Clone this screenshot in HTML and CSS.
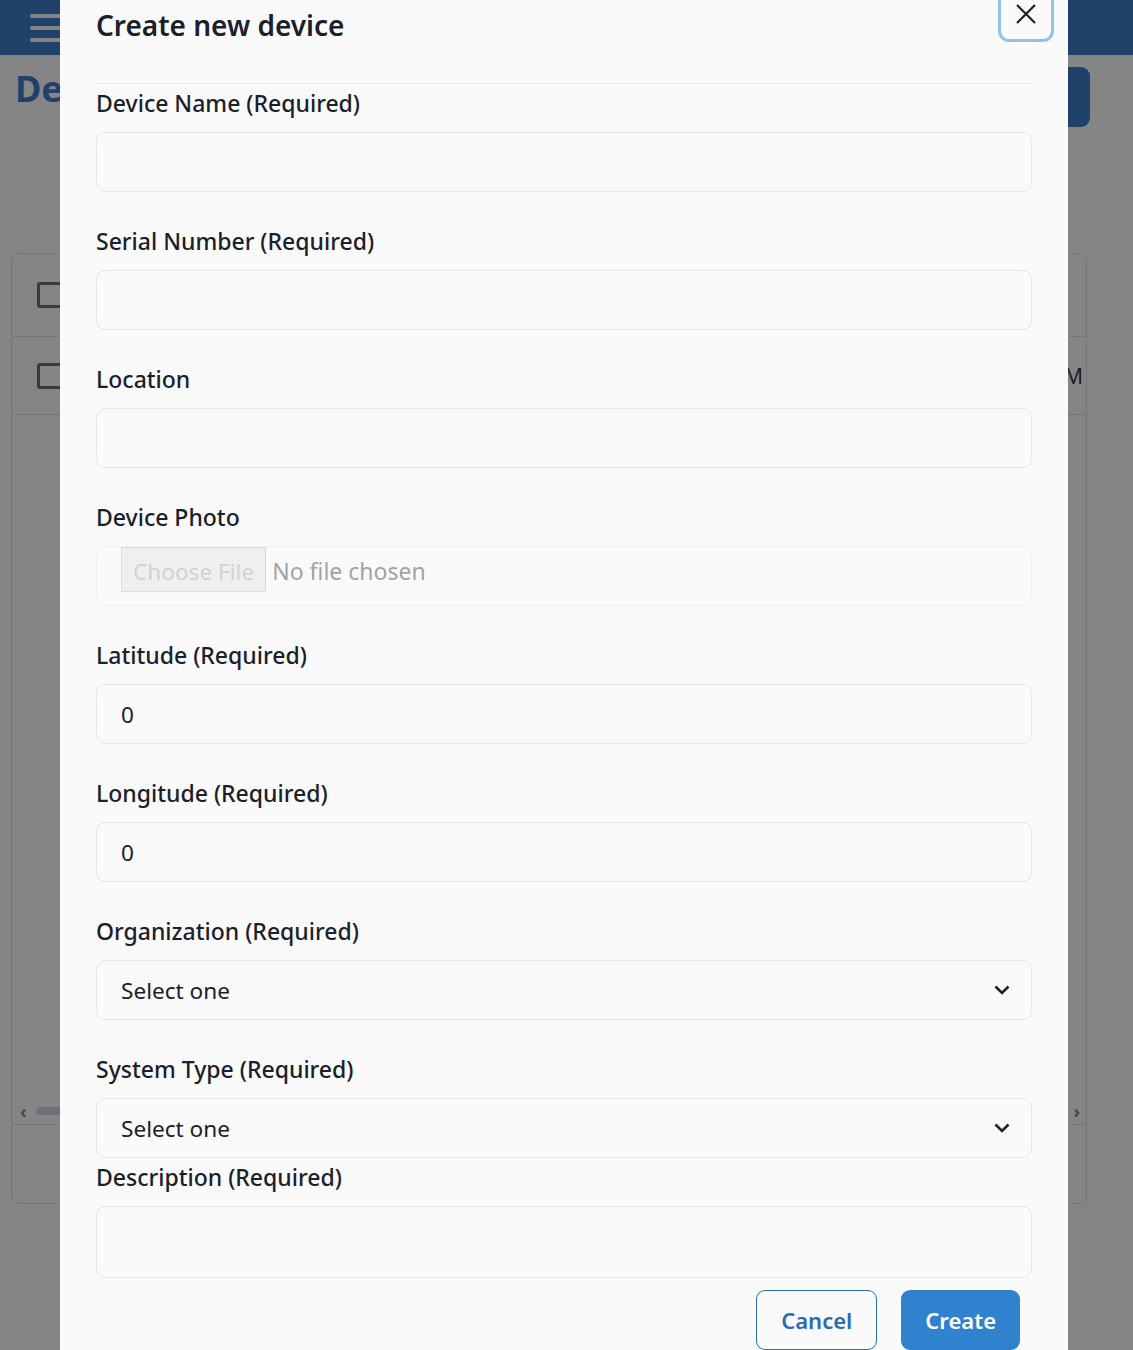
FILE: index.html
```html
<!DOCTYPE html>
<html lang="en">
<head>
  <meta charset="UTF-8">
  <title>Devices</title>
  <link rel="stylesheet" href="styles.css">
</head>
<body>

<!-- page behind the modal -->
<header class="navbar">
  <button class="menu-btn" type="button"><span></span><span></span><span></span></button>
</header>

<main class="page">
  <div class="page-head">
    <h1>Devices</h1>
    <button class="add-btn" type="button">Add device</button>
  </div>

  <div class="table-card">
    <div class="table-row head"><span class="check"></span></div>
    <div class="table-row"><span class="check"></span><span class="cell-end">10:00 AM</span></div>
    <div class="table-body"></div>
    <div class="table-scroll"><span class="arrow">&#8249;</span><div class="thumb"></div><span class="arrow">&#8250;</span></div>
    <div class="table-foot"></div>
  </div>
</main>

<div class="backdrop"></div>

<!-- CREATE DEVICE MODAL -->
<section class="modal">
  <div class="modal-head">
    <h2 class="modal-title">Create new device</h2>
    <button class="close-btn" type="button" aria-label="Close">
      <svg width="20" height="20" viewBox="0 0 20 20"><path d="M1 1 L19 19 M19 1 L1 19" stroke="#1a202c" stroke-width="2.2" fill="none"/></svg>
    </button>
  </div>

  <form class="modal-form">
    <div class="field">
      <label>Device Name (Required)</label>
      <input class="input" type="text">
    </div>
    <div class="field">
      <label>Serial Number (Required)</label>
      <input class="input" type="text">
    </div>
    <div class="field">
      <label>Location</label>
      <input class="input" type="text">
    </div>
    <div class="field">
      <label>Device Photo</label>
      <input class="input file-input" type="file" accept="image/*">
    </div>
    <div class="field">
      <label>Latitude (Required)</label>
      <input class="input" type="number" value="0">
    </div>
    <div class="field">
      <label>Longitude (Required)</label>
      <input class="input" type="number" value="0">
    </div>
    <div class="field">
      <label>Organization (Required)</label>
      <div class="select-wrap">
        <select class="input select"><option>Select one</option></select>
        <svg class="chevron" width="16" height="10" viewBox="0 0 16 10"><path d="M1.5 1.5 L8 8 L14.5 1.5" stroke="#1a202c" stroke-width="2.6" fill="none"/></svg>
      </div>
    </div>
    <div class="field tight">
      <label>System Type (Required)</label>
      <div class="select-wrap">
        <select class="input select"><option>Select one</option></select>
        <svg class="chevron" width="16" height="10" viewBox="0 0 16 10"><path d="M1.5 1.5 L8 8 L14.5 1.5" stroke="#1a202c" stroke-width="2.6" fill="none"/></svg>
      </div>
    </div>
    <div class="field last">
      <label>Description (Required)</label>
      <textarea class="input textarea"></textarea>
    </div>

    <div class="modal-foot">
      <button class="btn btn-outline" type="button">Cancel</button>
      <button class="btn btn-solid" type="submit">Create</button>
    </div>
  </form>
</section>

</body>
</html>
```
FILE: styles.css
```css
body {
    margin: 0;
    height: 1350px;
    overflow: hidden;
    background: #fff;
    font-family: "Noto Sans", sans-serif;
}

/* page behind */

.navbar {
    height: 55px;
    background: #3f7fcc;
    padding-left: 30px;
    display: flex;
    align-items: center;
}

.menu-btn {
    width: 40px;
    padding: 0;
    border: none;
    background: none;
    display: flex;
    flex-direction: column;
    gap: 8px;
}

.menu-btn span {
    display: block;
    height: 4px;
    border-radius: 2px;
    background: #fff;
}

.page {
    padding: 12px 43px 0 11px;
}

.page-head {
    display: flex;
    justify-content: space-between;
    align-items: flex-start;
    height: 60px;
}

.page-head h1 {
    margin: 1px 0 0 4px;
    font-size: 36px;
    line-height: 42px;
    font-weight: 700;
    color: #3f7fcc;
}

.add-btn {
    width: 200px;
    height: 60px;
    border: none;
    border-radius: 9px;
    background: #3f7fcc;
}

.table-card {
    margin: 126px 3px 0 0;
    border: 1px solid #e2e2e2;
    border-radius: 8px;
}

.table-row {
    display: flex;
    align-items: center;
    justify-content: space-between;
    height: 77px;
    padding: 0 3px 0 25px;
    border-bottom: 1px solid #e2e2e2;
}

.table-row.head {
    height: 82px;
}

.check {
    width: 20px;
    height: 20px;
    border: 3px solid #727272;
    border-radius: 3px;
}

.cell-end {
    font-size: 21px;
    color: #3a3a3a;
}

.table-body {
    height: 683px;
}

.table-scroll {
    display: flex;
    align-items: center;
    gap: 9px;
    height: 26px;
    padding: 0 6px 0 8px;
    border-bottom: 1px solid #e2e2e2;
    font-size: 18px;
    color: #8a8a8a;
}

.thumb {
    flex: 1;
    height: 8px;
    border-radius: 4px;
    background: #d2dbe6;
    margin-right: 40px;
}

.arrow {
    line-height: 10px;
    font-weight: 700;
}

.table-foot {
    height: 78px;
}

.backdrop {
    position: fixed;
    inset: 0;
    background: rgba(0, 0, 0, 0.48);
}

/* modal */

.modal {
    position: fixed;
    top: -14px;
    left: 60px;
    width: 1008px;
    box-sizing: border-box;
    padding: 0 36px;
    background: #fafafa;
    color: #1a202c;
}

.modal-head {
    display: flex;
    justify-content: space-between;
    align-items: flex-start;
    border-bottom: 1px solid #ebebeb;
}

.modal-title {
    margin: 0;
    padding: 21px 0 40px;
    font-size: 28px;
    line-height: 36px;
    font-weight: 600;
}

.close-btn {
    width: 56px;
    height: 56px;
    margin-right: -22px;
    padding: 0;
    border: 3px solid #90c2ec;
    border-radius: 11px;
    background: transparent;
    display: flex;
    align-items: center;
    justify-content: center;
}

.modal-form {
    padding-top: 6px;
}

.field {
    margin-bottom: 36px;
}

.field.tight {
    margin-bottom: 6px;
}

.field.last {
    margin-bottom: 0;
}

.field label {
    display: block;
    margin-bottom: 15px;
    font-size: 23px;
    line-height: 27px;
    font-weight: 500;
}

.input {
    display: block;
    width: 100%;
    height: 60px;
    box-sizing: border-box;
    padding: 0 24px;
    border: 1px solid #e2e8f0;
    border-radius: 9px;
    background: #fafafa;
    font-family: "Noto Sans", sans-serif;
    font-size: 22.6px;
    color: #1a202c;
    outline: none;
}

.input[type=number]::-webkit-inner-spin-button {
    -webkit-appearance: none;
}

.file-input {
    border-color: #f0f0f0;
    color: #a3a3a3;
    font-size: 23px;
    padding-top: 0;
}

.file-input::file-selector-button {
    height: 45px;
    margin: 0 6px 0 0;
    padding: 3px 11px 0;
    border: 1px solid #dcdcdc;
    border-radius: 0;
    background: #efefef;
    font-family: "Noto Sans", sans-serif;
    font-size: 22.6px;
    color: #d2d2d2;
}

.select-wrap {
    position: relative;
}

.select {
    appearance: none;
    -webkit-appearance: none;
}

.chevron {
    position: absolute;
    right: 22px;
    top: 25px;
    pointer-events: none;
}

.textarea {
    height: 72px;
    resize: none;
    padding-top: 12px;
}

.modal-foot {
    display: flex;
    justify-content: flex-end;
    gap: 24px;
    padding: 12px 12px 0 0;
}

.btn {
    height: 60px;
    padding: 0 24px;
    border-radius: 9px;
    font-family: "Noto Sans", sans-serif;
    font-size: 22px;
    font-weight: 600;
    cursor: pointer;
}

.btn-outline {
    border: 1px solid #2b6cb0;
    background: transparent;
    color: #2b6cb0;
}

.btn-solid {
    border: none;
    background: #3182ce;
    color: #fff;
}
```
